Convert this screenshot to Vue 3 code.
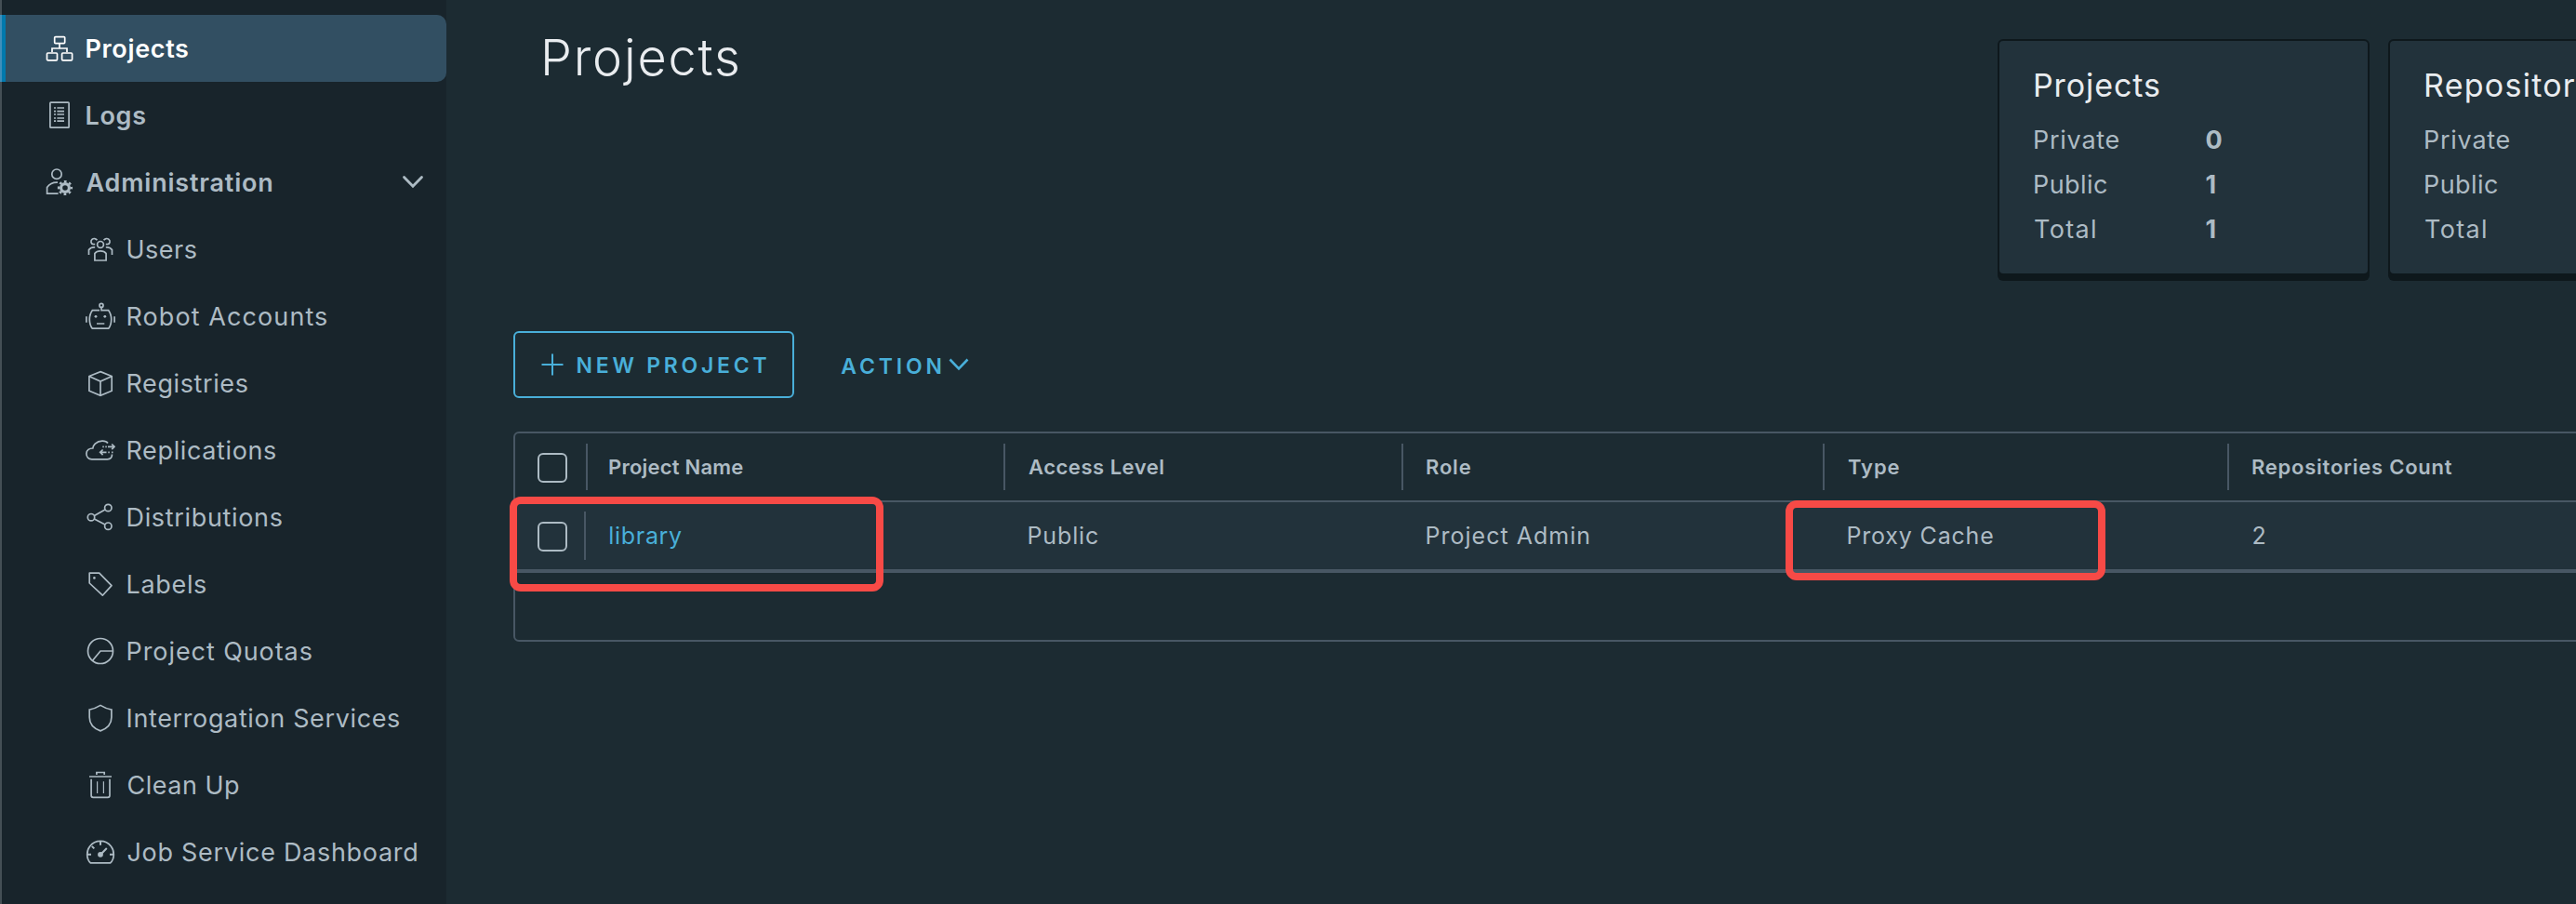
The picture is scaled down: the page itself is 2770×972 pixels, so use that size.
<script setup>
const nav = [
  { label: 'Projects', icon: 'projects', w: 109.6, active: true },
  { label: 'Logs', icon: 'logs', w: 63.7 },
  { label: 'Administration', icon: 'admin', w: 199.8, open: true },
  { label: 'Users', icon: 'users', w: 73.2, child: true },
  { label: 'Robot Accounts', icon: 'robot', w: 213.6, child: true },
  { label: 'Registries', icon: 'cube', w: 128.2, child: true },
  { label: 'Replications', icon: 'cloud', w: 158.6, child: true },
  { label: 'Distributions', icon: 'share', w: 165.2, child: true },
  { label: 'Labels', icon: 'tag', w: 83.6, child: true },
  { label: 'Project Quotas', icon: 'quota', w: 197.2, child: true },
  { label: 'Interrogation Services', icon: 'shield', w: 291.6, child: true },
  { label: 'Clean Up', icon: 'trash', w: 119.5, child: true },
  { label: 'Job Service Dashboard', icon: 'gauge', w: 310.8, child: true },
]

const icons = {
  projects:
    '<rect x="10.7" y="3.6" width="11" height="7" rx="1"/><rect x="2.5" y="21" width="11" height="7.8" rx="1"/><rect x="18.6" y="21" width="11" height="7.8" rx="1"/><path d="M16 11v5M8 20v-4h16v4"/>',
  logs:
    '<rect x="5.9" y="2.2" width="20.2" height="27" rx=".8"/><path d="M10 8h2M10 11.6h2M10 15h2M10 19h2M10 22.2h2M13.4 8H21M13.4 11.6H21M13.4 15H21M13.4 19H21M13.4 22.2H21"/>',
  admin:
    '<circle cx="13" cy="7.2" r="5.2"/><path d="M14 16.2C8.5 15.9 5 18 2.6 21.4v6.8h12"/><circle cx="22" cy="22" r="4.4" stroke-width="3.2"/><circle cx="22" cy="22" r="6.8" stroke-width="2.6" stroke-dasharray="2.67" stroke-dashoffset="1.33"/>',
  users:
    '<circle cx="16" cy="10.9" r="3.4"/><path d="M9.9 28v-7.4c1.4-2 3.6-2.7 6.1-2.7s4.7.7 6.1 2.7V28z"/><path d="M12.4 6.2C11.3 4.3 8.6 4 7 5.4c-1.8 1.7-1.3 4.7 1.2 5.3h2"/><path d="M19.6 6.2C20.7 4.3 23.4 4 25 5.4c1.8 1.7 1.3 4.7-1.2 5.3h-2"/><path d="M10.2 14C7.3 13.7 5 14.7 3.5 16.6V22M21.8 14c2.9-.3 5.2.7 6.7 2.6V22"/>',
  robot:
    '<circle cx="17" cy="4.4" r="2"/><path d="M15 9.7H7.3C3.3 15 3.3 24.2 7.3 29.2h17.4c4-5 4-14.2 0-19.5H17V6.4M.9 16.300v6.400M31.100 16.300v6.400M12 24h8.300"/><circle cx="11" cy="16.300" r="1.400" class="solid"/><circle cx="20.800" cy="16.300" r="1.400" class="solid"/>',
  cube: '<path d="M16 3.6 28.2 8.5v15.8L16 29.400 3.900 24.300V8.500zM4.200 8.700 16 14l11.900-5.300M16 14v15"/>',
  cloud:
    '<path d="M24 8.600C21.800 5.400 14.700 5.200 10.300 9.200 9 10.500 8 12 7.800 14 4.200 13.900.9 16 .9 19.800c0 3.500 2.400 6 5.800 6H23.500c3.500 0 5-2.500 5-5.200"/><path d="M24 12.300h7M28.200 9.500l2.800 2.800-2.800 2.800M22.500 18.300H15.500M18.600 15.500l-2.900 2.800 2.900 2.800M18.300 12.300h1.500M21.300 12.300h1.500M24.300 18.300h1.500M28 18.300h1.500"/>',
  share: '<circle cx="24.300" cy="6" r="3.700"/><circle cx="6" cy="16.200" r="3.700"/><circle cx="24.300" cy="25.700" r="3.700"/><path d="M9.400 14.600 20.900 7.900M9.400 17.900l11.500 6"/>',
  tag: '<path d="M4.200 15V4.200H14.700L28 17.600 18.300 28.200z" stroke-linejoin="round"/><circle cx="9.400" cy="9.400" r="1.300" class="solid"/>',
  quota: '<circle cx="16" cy="16" r="13.500"/><path d="M29.200 16H16L7.500 26.200"/>',
  shield: '<path d="M16 2.400C12.500 4.600 8.500 6.200 4.200 7v8.200C4.200 22 9 27.300 16 29.900 23 27.300 27.900 22 27.900 15.200V7C23.600 6.200 19.500 4.600 16 2.400z"/>',
  trash: '<path d="M4 7h24M11.900 5V2.500h8.300V5M6.100 9.700v17.600q0 2 2 2h15.900q2 0 2-2V9.700"/><path d="M12.600 12.300V25M19.400 12.300V25" stroke-width="1.200"/>',
  gauge:
    '<path d="M5.400 27.900C.4 23 .8 14.800 4.600 9.900 10.300 2.600 21.700 2.600 27.400 9.900c3.800 4.900 4.200 13.100-.8 18z"/><path d="M16 4.500v4.300M1.700 18.700H6M26 18.700h4.300M6.800 9.900l2.500 2.500M16 19l6.800-7" stroke-width="2"/><circle cx="16" cy="18.800" r="2.900" class="solid"/>',
}

const cards = [
  {
    title: 'Projects',
    w: 133.9,
    rows: [
      { k: 'Private', w: 90.6, v: '0' },
      { k: 'Public', w: 78, v: '1' },
      { k: 'Total', w: 65, v: '1' },
    ],
  },
  {
    title: 'Repositories',
    w: 210,
    rows: [
      { k: 'Private', w: 90.6 },
      { k: 'Public', w: 78 },
      { k: 'Total', w: 65 },
    ],
  },
]

const columns = [
  { head: 'Project Name', hw: 144.3, cell: 'library', cw: 77.8, link: true },
  { head: 'Access Level', hw: 145.3, cell: 'Public', cw: 74.5 },
  { head: 'Role', hw: 47.7, cell: 'Project Admin', cw: 173.8 },
  { head: 'Type', hw: 55.5, cell: 'Proxy Cache', cw: 155.7 },
  { head: 'Repositories Count', hw: 214.8, cell: '2', cw: 13.7 },
]

// Tracks a label so that its visible glyphs span the given width,
// starting flush with the left edge of its box.
const ctx = document.createElement('canvas').getContext('2d')
const vFit = {
  mounted(el, { value }) {
    const s = getComputedStyle(el)
    const text = el.textContent
    ctx.font = `${s.fontWeight} ${s.fontSize} ${s.fontFamily}`
    const m = ctx.measureText(text)
    const ink = m.actualBoundingBoxLeft + m.actualBoundingBoxRight
    if (text.length > 1) el.style.letterSpacing = `${((value - ink) / (text.length - 1)).toFixed(3)}px`
    el.style.marginLeft = `${m.actualBoundingBoxLeft.toFixed(2)}px`
  },
}
</script>

<template>
  <div class="app">
    <nav class="sidebar">
      <a v-for="n in nav" :key="n.label" class="item" :class="{ active: n.active, child: n.child }">
        <svg class="icon" viewBox="0 0 32 32" v-html="icons[n.icon]"></svg>
        <span class="label"><span v-fit="n.w">{{ n.label }}</span></span>
        <svg v-if="n.open" class="caret" viewBox="0 0 24 16"><path d="M2.5 2.5 12 12.3 21.5 2.5" /></svg>
      </a>
    </nav>

    <main class="main">
      <header class="top">
        <h1><span v-fit="207">Projects</span></h1>
        <div class="cards">
          <section v-for="c in cards" :key="c.title" class="card">
            <h2><span v-fit="c.w">{{ c.title }}</span></h2>
            <div v-for="r in c.rows" :key="r.k" class="stat">
              <span class="key"><span v-fit="r.w">{{ r.k }}</span></span>
              <b v-if="r.v" v-fit="0">{{ r.v }}</b>
            </div>
          </section>
        </div>
      </header>

      <div class="actions">
        <button class="new">
          <svg class="plus" viewBox="0 0 24 24"><path d="M12 .5v23M.5 12h23" /></svg>
          <span v-fit="204">NEW PROJECT</span>
        </button>
        <button class="menu">
          <span v-fit="107.3">ACTION</span>
          <svg class="down" viewBox="0 0 24 16"><path d="M2.5 2.5 12 12.3 21.5 2.5" /></svg>
        </button>
      </div>

      <div class="grid">
        <div class="row head">
          <div class="check"><i class="box"></i></div>
          <div v-for="c in columns" :key="c.head" class="cell"><span v-fit="c.hw">{{ c.head }}</span></div>
        </div>
        <div class="row body">
          <div class="check"><i class="box"></i></div>
          <div v-for="c in columns" :key="c.head" class="cell">
            <span v-fit="c.cw" :class="{ link: c.link }">{{ c.cell }}</span>
          </div>
        </div>
        <div class="mark mark-name"></div>
        <div class="mark mark-type"></div>
      </div>
    </main>
  </div>
</template>

<style>
body {
  background: #1c2b32;
}
</style>

<style scoped>
.app {
  display: flex;
  width: 2770px;
  height: 972px;
  overflow: hidden;
  box-sizing: border-box;
  background: #1c2b32;
  color: #adbbc4;
  font-family: Inter, "Open Sans", sans-serif;
  font-size: 27px;
}
.app span {
  white-space: nowrap;
}
svg {
  flex: none;
  fill: none;
  stroke: currentColor;
}

.sidebar {
  flex: none;
  width: 480px;
  box-sizing: border-box;
  padding-top: 16px;
  background: linear-gradient(90deg, #444f55 2px, #18242b 2px);
}
.item {
  display: flex;
  align-items: center;
  height: 72px;
  box-sizing: border-box;
  padding-left: 48px;
  font-weight: 600;
  line-height: 70px;
}
.item.child {
  padding-left: 92px;
  font-weight: 400;
}
.item.active {
  color: #fff;
  border-radius: 0 10px 10px 0;
  background: linear-gradient(90deg, #408fba 2px, #0079ad 2px, #0079ad 6px, #324f62 6px);
}
.icon {
  width: 32px;
  height: 32px;
  stroke-width: 1.7;
}
.icon :deep(.solid) {
  fill: currentColor;
  stroke: none;
}
.label {
  flex: 1;
  padding: 2px 0 0 12.5px;
}
.child .label {
  padding-left: 13.5px;
}
.caret {
  width: 24px;
  height: 16px;
  margin-right: 24px;
  stroke-width: 2.8;
  stroke-linecap: round;
}

.main {
  flex: 1;
  min-width: 0;
  padding-left: 72px;
}
.top {
  display: flex;
  justify-content: space-between;
  height: 356px;
}
h1 {
  margin: 30px 0 0 34px;
  color: #e9ecef;
  font-size: 54px;
  font-weight: 350;
  line-height: 64px;
}
.cards {
  display: flex;
  gap: 20px;
  margin: 42px -198px 0 0;
}
.card {
  width: 400px;
  height: 254px;
  box-sizing: border-box;
  padding: 25px 0 0 38px;
  border: 2px solid #0e181c;
  border-radius: 6px;
  background: #22323b;
  box-shadow: 0 6px 0 #0e181c;
}
h2 {
  margin: 0 0 12px;
  color: #e9ecef;
  font-size: 34px;
  font-weight: 400;
  line-height: 46px;
}
.stat {
  display: flex;
  height: 48px;
  line-height: 48px;
}
.key {
  width: 184.5px;
}
.stat b {
  font-weight: 700;
}

.actions {
  display: flex;
  height: 108px;
  align-items: flex-start;
}
button {
  display: flex;
  align-items: center;
  height: 72px;
  box-sizing: border-box;
  border: 0;
  background: none;
  color: #49afd9;
  font: 600 23px Inter, "Open Sans", sans-serif;
}
.new {
  width: 302px;
  padding: 2px 0 0 28px;
  border: 2px solid #49afd9;
  border-radius: 6px;
}
.new span {
  padding-left: 14.5px;
}
.plus {
  width: 24px;
  height: 24px;
  margin-top: -2px;
  stroke-width: 2;
}
.menu {
  padding: 3px 0 0 50.3px;
}
.down {
  width: 24px;
  height: 16px;
  margin: 0 0 4px 2px;
  stroke-width: 2.6;
}

.grid {
  position: relative;
  width: 2300px;
  height: 226px;
  box-sizing: border-box;
  border: 2px solid #485764;
  border-radius: 6px;
}
.row {
  display: grid;
  grid-template-columns: 76px 449px 428px 453px 435px 1fr;
  align-items: center;
  height: 72px;
}
.head {
  border-bottom: 2px solid #485764;
  font-size: 22px;
  font-weight: 600;
}
.body {
  border-bottom: 4px solid #485764;
  background: #22323b;
  font-size: 25px;
}
.check {
  padding-left: 24px;
}
.box {
  display: block;
  width: 32px;
  height: 32px;
  box-sizing: border-box;
  margin-top: 2px;
  border: 2px solid #adbbc4;
  border-radius: 6px;
}
.cell {
  box-sizing: border-box;
  height: 50px;
  padding-left: 25px;
  border-left: 2px solid #485764;
  line-height: 50px;
}
.cell:nth-child(2) {
  padding-left: 23px;
}
.body .cell {
  padding-left: 25.5px;
  border-color: transparent;
}
.body .cell:nth-child(2) {
  height: 52px;
  margin-left: -2px;
  padding-left: 25.3px;
  border-color: #485764;
  line-height: 53px;
}
.link {
  color: #49afd9;
}
.mark {
  position: absolute;
  box-sizing: border-box;
  border: 8px solid #f74a46;
  border-radius: 12px;
}
.mark-name {
  left: -6px;
  top: 68px;
  width: 402px;
  height: 102px;
}
.mark-type {
  left: 1366px;
  top: 72px;
  width: 344px;
  height: 86px;
}
</style>
